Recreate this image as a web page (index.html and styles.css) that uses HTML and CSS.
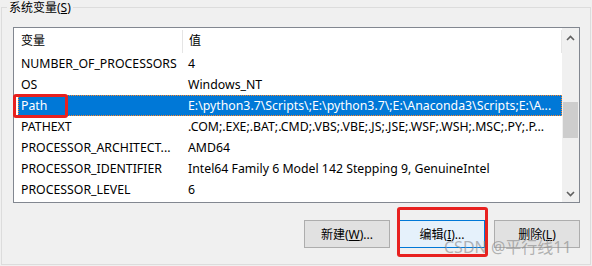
FILE: index.html
```html
<!DOCTYPE html>
<html>
<head>
    <meta charset="UTF-8">
    <title>系统变量</title>
    <link rel="stylesheet" href="styles.css">
</head>
<body>
    <div class="group">
        <div class="legend">系统变量(<u>S</u>)</div>

        <div class="list">
            <div class="table">
                <div class="head">
                    <div class="c1">变量</div>
                    <div class="c2">值</div>
                </div>
                <div class="row"><div class="c1">NUMBER_OF_PROCESSORS</div><div class="c2">4</div></div>
                <div class="row"><div class="c1">OS</div><div class="c2">Windows_NT</div></div>
                <div class="row sel"><div class="c1">Path</div><div class="c2">E:\python3.7\Scripts\;E:\python3.7\;E:\Anaconda3\Scripts;E:\A...</div></div>
                <div class="row"><div class="c1">PATHEXT</div><div class="c2">.COM;.EXE;.BAT;.CMD;.VBS;.VBE;.JS;.JSE;.WSF;.WSH;.MSC;.PY;.P...</div></div>
                <div class="row"><div class="c1">PROCESSOR_ARCHITECT...</div><div class="c2">AMD64</div></div>
                <div class="row"><div class="c1">PROCESSOR_IDENTIFIER</div><div class="c2">Intel64 Family 6 Model 142 Stepping 9, GenuineIntel</div></div>
                <div class="row"><div class="c1">PROCESSOR_LEVEL</div><div class="c2">6</div></div>
            </div>
            <div class="scrollbar">
                <div class="sb-up">
                    <svg width="9" height="6" viewBox="0 0 9 6"><path d="M1 5 L4.5 1.5 L8 5" fill="none" stroke="#606060" stroke-width="1.6"/></svg>
                </div>
                <div class="sb-track"><div class="thumb"></div></div>
                <div class="sb-down">
                    <svg width="9" height="6" viewBox="0 0 9 6"><path d="M1 1 L4.5 4.5 L8 1" fill="none" stroke="#606060" stroke-width="1.6"/></svg>
                </div>
            </div>
        </div>

        <div class="buttons">
            <button class="btn">新建(<u>W</u>)...</button>
            <button class="btn focus">编辑(<u>I</u>)...</button>
            <button class="btn">删除(<u>L</u>)</button>
        </div>

        <!-- screenshot annotations -->
        <div class="mark mark-path"></div>
        <div class="mark mark-edit"></div>
        <div class="watermark">CSDN @平行线11</div>
    </div>
</body>
</html>
```

FILE: styles.css
```css
* {
    box-sizing: border-box;
}
body {
    margin: 0;
    width: 592px;
    height: 266px;
    overflow: hidden;
    background: #f0f0f0;
    color: #000;
    font-family: "Noto Sans", "Noto Sans CJK SC", sans-serif;
    font-size: 12px;
}
.group {
    position: relative;
    margin: 7px 1px 0 1px;
    height: 258px;
    border: 1px solid #dcdcdc;
}
.legend {
    position: absolute;
    top: -8px;
    left: 5px;
    padding: 0 2px;
    background: #f0f0f0;
    line-height: 16px;
}
.list {
    display: flex;
    margin: 19px 10px 0 11px;
    height: 176px;
    border: 1px solid #828790;
    background: #fff;
}
.table {
    flex: 1;
    min-width: 0;
}
.head {
    display: flex;
    align-items: flex-end;
    height: 25px;
}
.head .c1,
.head .c2 {
    height: 23px;
    line-height: 22px;
}
.head .c1 {
    width: 168px;
    padding-left: 7px;
}
.head .c2 {
    flex: 1;
    padding-left: 6px;
    border-left: 1px solid #e5e5e5;
    border-right: 1px solid #e5e5e5;
}
.row {
    display: flex;
    align-items: center;
    height: 21px;
    font-size: 12.3px;
    white-space: nowrap;
}
.row .c1 {
    width: 168px;
    padding-left: 7px;
    overflow: hidden;
}
.row .c2 {
    flex: 1;
    padding-left: 6px;
    overflow: hidden;
}
.row.sel {
    margin-left: 4px;
    background: #0078d7;
    color: #fff;
    border: 1px dotted #ff8728;
}
.row.sel .c1 {
    width: 163px;
    padding-left: 2px;
}
.scrollbar {
    display: flex;
    flex-direction: column;
    width: 17px;
    background: #f0f0f0;
}
.sb-up,
.sb-down {
    display: flex;
    align-items: center;
    justify-content: center;
}
.sb-up {
    height: 20px;
}
.sb-down {
    height: 17px;
}
.sb-track {
    flex: 1;
    padding: 54px 1px 0;
}
.thumb {
    height: 36px;
    background: #cdcdcd;
}
.buttons {
    display: flex;
    justify-content: flex-end;
    gap: 9px;
    margin: 17px 10px 0 0;
}
.btn {
    width: 86px;
    height: 28px;
    padding: 0;
    border: 1px solid #adadad;
    background: #e1e1e1;
    color: #000;
    font: inherit;
}
.btn.focus {
    background: #e5f1fb;
    border-color: #0078d7;
}
.mark {
    position: absolute;
    border: 3px solid #e8211f;
    border-radius: 3px;
}
.mark-path {
    left: 11px;
    top: 86px;
    width: 55px;
    height: 24px;
}
.mark-edit {
    left: 395px;
    top: 199px;
    width: 91px;
    height: 50px;
}
.watermark {
    position: absolute;
    left: 442px;
    top: 230px;
    font-size: 16px;
    line-height: 18px;
    color: rgba(140, 140, 140, 0.65);
    white-space: nowrap;
}
```
